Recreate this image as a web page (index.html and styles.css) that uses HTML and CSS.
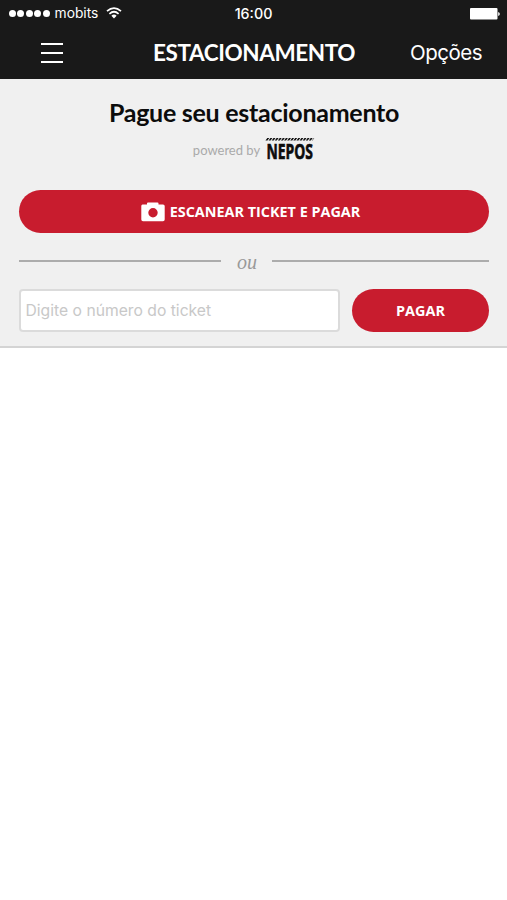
FILE: index.html
```html
<!DOCTYPE html>
<html lang="pt-BR">
<head>
<meta charset="utf-8">
<title>Estacionamento</title>
<link rel="stylesheet" href="styles.css">
</head>
<body>
<header class="topbar">
  <div class="status">
    <div class="carrier">
      <span class="dots"><i></i><i></i><i></i><i></i><i></i></span>
      <span class="carrier-name">mobits</span>
      <svg class="wifi" width="16" height="12" viewBox="0 0 16 12" fill="none" stroke="#fff" stroke-width="1.7">
        <path d="M1 4.2Q8-2 15 4.2M3.4 6.8Q8 2.7 12.6 6.8"/>
        <path d="M5.4 8.7Q8 6.3 10.6 8.7L8 11.5Z" fill="#fff" stroke="none"/>
      </svg>
    </div>
    <span class="clock">16:00</span>
    <svg class="battery" width="30" height="12" viewBox="0 0 30 12" fill="#fff">
      <rect width="27.5" height="11.5" rx="1"/>
      <path d="M28.2 4Q29.8 4.3 29.8 6T28.2 8Z"/>
    </svg>
  </div>
  <nav class="nav">
    <div class="menu"><i></i><i></i><i></i></div>
    <h1 class="title">ESTACIONAMENTO</h1>
    <span class="options">Opções</span>
  </nav>
</header>
<main class="panel">
  <h2 class="heading">Pague seu estacionamento</h2>
  <div class="powered">
    <span class="powered-text">powered by</span>
    <svg class="logo" width="50" height="30" viewBox="0 0 50 30">
      <path d="M3 2.3H50" stroke="#111" stroke-width="2.6" stroke-dasharray="2 1.1" transform="skewX(-35)"/>
      <text class="logo-text" x="1.5" y="21.8" textLength="46.5" lengthAdjust="spacingAndGlyphs">NEPOS</text>
    </svg>
  </div>
  <button class="btn scan">
    <svg class="camera" width="24" height="20" viewBox="0 0 24 20">
      <path fill="#fff" fill-rule="evenodd" d="M1.5 2.5H6V1.5Q6 .5 7 .5H16.500Q17.500.5 17.500 1.500V2.500H22Q23.700 2.500 23.700 4V17.500Q23.700 19.200 22 19.200H2Q.3 19.200.3 17.500V4Q.3 2.500 1.500 2.500ZM12 6A4.700 4.700 0 1 0 12 15.400A4.700 4.700 0 1 0 12 6Z"/>
    </svg>
    <span class="scan-label">ESCANEAR TICKET E PAGAR</span>
  </button>
  <div class="divider"><span class="or">ou</span></div>
  <div class="form">
    <input class="ticket" type="text" placeholder="Digite o número do ticket">
    <button class="btn pay"><span class="pay-label">PAGAR</span></button>
  </div>
</main>
</body>
</html>
```

FILE: styles.css
```css
* { box-sizing: border-box; }
body { margin: 0; background: #fff; font-family: Lato, sans-serif; }
.topbar { height: 79px; background: #191919; color: #fff; }
.status {
  display: grid;
  grid-template-columns: 1fr auto 1fr;
  align-items: center;
  height: 27px;
  padding: 0 7px 0 9px;
  font: 500 14.3px/27px Inter, sans-serif;
}
.carrier { display: flex; align-items: center; font-size: 13.8px; font-weight: 400; }
.dots { display: flex; gap: 1.4px; margin-right: 5px; }
.dots i { width: 7px; height: 7px; border-radius: 50%; background: #fff; }
.wifi { margin: 0 0 2px 8px; }
.clock { margin-right: 2px; }
.battery { justify-self: end; }
.nav {
  display: grid;
  grid-template-columns: 112px auto 1fr;
  align-items: center;
  height: 52px;
  padding: 0 25px 0 41px;
}
.menu { display: grid; gap: 6.5px; width: 22px; }
.menu i { height: 2.4px; background: #fff; }
.title { margin: 0; font: 700 22.5px/52px Lato, sans-serif; letter-spacing: -0.4px; }
.options { justify-self: end; font: 400 20.5px/52px Inter, sans-serif; letter-spacing: -0.5px; }
.panel {
  height: 269px;
  padding: 17px 18px 0 19px;
  background: #f0f0f0;
  border-bottom: 2px solid #d4d4d4;
}
.heading { margin: 0; text-align: center; font: 700 25px/32px Lato, sans-serif; letter-spacing: -0.27px; color: #0c0c0c; }
.powered { display: flex; justify-content: center; gap: 5px; height: 23px; margin-top: 9px; }
.powered-text { font: 400 13px/26px Lato, sans-serif; color: #aaa; }
.logo { overflow: visible; }
.logo-text { font: 700 22px "Open Sans", sans-serif; fill: #0c0c0c; stroke: #0c0c0c; stroke-width: 0.7px; }
.btn {
  display: flex;
  align-items: center;
  justify-content: center;
  height: 43px;
  padding: 0;
  border: 0;
  border-radius: 22px;
  background: #c81c2e;
  color: #fff;
  font: 700 14.4px/20px "Open Sans", sans-serif;
}
.scan { gap: 5px; width: 100%; margin-top: 30px; padding-right: 7px; }
.divider { display: flex; align-items: center; height: 56px; gap: 16px; }
.divider::before, .divider::after { content: ""; height: 2px; background: #acacac; }
.divider::before { width: 202px; }
.divider::after { flex: 1; }
.or { width: 19px; margin-top: 2px; text-align: center; font: italic 20px/24px "Liberation Serif", serif; color: #999; }
.form { display: flex; gap: 12px; }
.ticket {
  flex: 1;
  min-width: 0;
  height: 43px;
  padding: 0 5px 1px 4.5px;
  border: 2px solid #dbdbdb;
  border-radius: 4px;
  background: #fff;
  font: 400 15.7px/20px Inter, sans-serif;
}
.ticket::placeholder { color: #c8c8c8; opacity: 1; }
.pay { width: 137px; }
```
